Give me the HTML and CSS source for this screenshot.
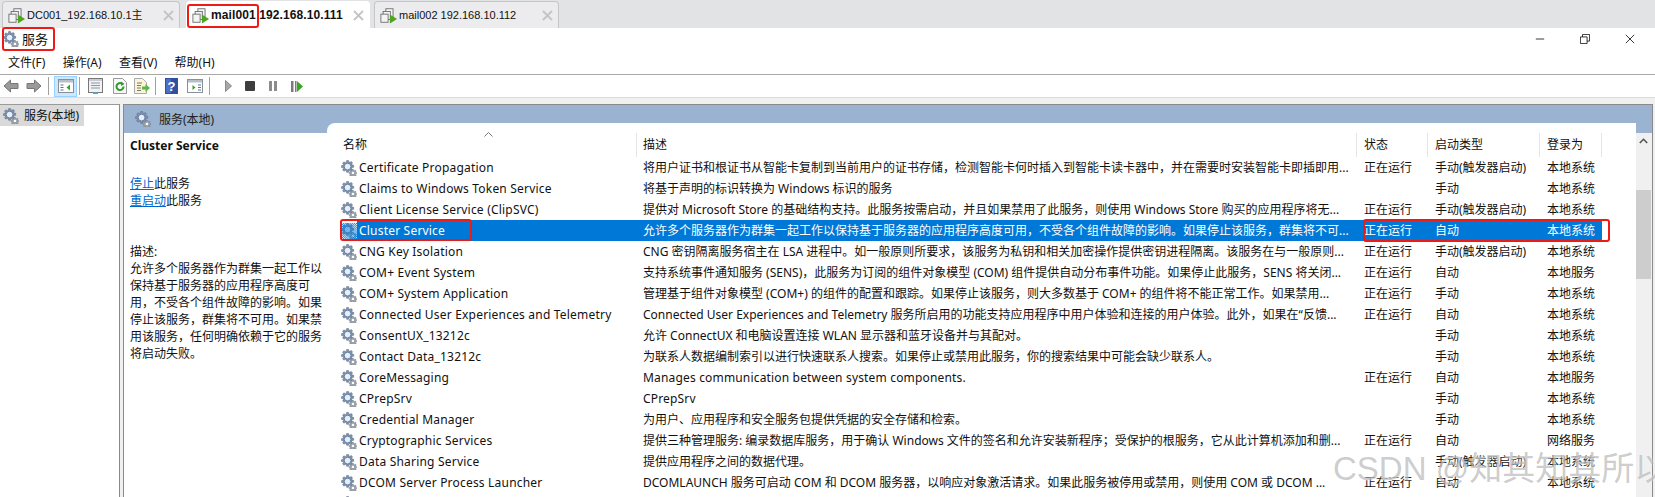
FILE: index.html
```html
<!DOCTYPE html>
<html lang="zh-CN">
<head>
<meta charset="utf-8">
<title>服务</title>
<link rel="stylesheet" href="styles.css">
</head>
<body>
<svg class="defs" width="0" height="0" aria-hidden="true">
  <defs>
    <pattern id="dither" width="2" height="2" patternUnits="userSpaceOnUse">
      <rect width="1" height="1" fill="#0078d7"/>
      <rect x="1" y="1" width="1" height="1" fill="#0078d7"/>
    </pattern>
  </defs>
  <symbol id="gear" viewBox="0 0 17 17">
    <path d="M6 .5h2l.3 1.500 1.200.5L10.800 1.600l1.500 1.400-.9 1.300.5 1.100 1.600.3v2l-1.600.3-.5 1.200.9 1.300-1.500 1.400-1.300-.9-1.200.5-.3 1.600H6l-.3-1.600-1.200-.5-1.300.9-1.500-1.400.9-1.300-.5-1.200L.5 8V6l1.600-.3.5-1.100-.9-1.300 1.500-1.400 1.300.9 1.200-.5z" fill="#7f93ad" stroke="#55627a" stroke-width=".5"/>
    <circle cx="7" cy="7" r="3.600" fill="#e6eef7" stroke="#5f7ba3" stroke-width="1"/>
    <path d="M12 10h1.400l.2 1 .8.3.8-.6 1 1-.6.8.3.8.6.1v1.400l-.6.2-.3.8.6.8-1 .6-.8-.5-.8.3-.2.6H12l-.2-.6-.8-.3-.8.5-1-.6.6-.8-.3-.8-.8-.2v-1.400l.8-.1.3-.8-.6-.8 1-1 .8.6.8-.3z" fill="#9aa3ad" stroke="#646d78" stroke-width=".4"/>
    <circle cx="12.700" cy="13.700" r="1.300" fill="#fff"/>
  </symbol>
  <symbol id="gear-selected" viewBox="0 0 17 17">
    <use href="#gear" width="17" height="17"/>
    <rect width="17" height="17" fill="url(#dither)"/>
  </symbol>
  <symbol id="vm" viewBox="0 0 20 18">
    <rect x="6.500" y="1.500" width="8" height="9" fill="#f4f4f4" stroke="#6d6d6d"/>
    <rect x="3.500" y="4.500" width="8" height="9" fill="#f4f4f4" stroke="#6d6d6d"/>
    <rect x="1" y="7.500" width="8" height="9" fill="#f4f4f4" stroke="#6d6d6d"/>
    <path d="M11 8l8 5-8 5z" fill="#4ea520"/>
  </symbol>
  <symbol id="close" viewBox="0 0 11 11">
    <path d="M1 1l9 9M10 1l-9 9" fill="none" stroke="#c4c4c4" stroke-width="1.800"/>
  </symbol>
</svg>

<header class="tabstrip">
  <div class="tab tab-first">
    <svg class="tab-icon"><use href="#vm"/></svg>
    <span class="tab-label">DC001_192.168.10.1主</span>
    <svg class="tab-close"><use href="#close"/></svg>
  </div>
  <div class="tab tab-active">
    <svg class="tab-icon"><use href="#vm"/></svg>
    <span class="tab-label">mail001 192.168.10.111</span>
    <svg class="tab-close"><use href="#close"/></svg>
  </div>
  <div class="tab tab-last">
    <svg class="tab-icon"><use href="#vm"/></svg>
    <span class="tab-label">mail002 192.168.10.112</span>
    <svg class="tab-close"><use href="#close"/></svg>
  </div>
</header>

<div class="titlebar">
  <svg class="gear"><use href="#gear"/></svg>
  <span class="title-text">服务</span>
  <div class="winbtns">
    <svg class="winbtn" viewBox="0 0 12 12"><path d="M1 6h10" stroke="#111" fill="none"/></svg>
    <svg class="winbtn" viewBox="0 0 12 12"><path d="M.5 3.500h8v8h-8zM3 3.500V.5h8.500v8H8.500" stroke="#111" fill="none"/></svg>
    <svg class="winbtn" viewBox="0 0 12 12"><path d="M1 1l10 10M11 1L1 11" stroke="#111" fill="none"/></svg>
  </div>
</div>

<nav class="menubar">
  <span>文件(F)</span><span>操作(A)</span><span>查看(V)</span><span>帮助(H)</span>
</nav>

<div class="toolbar">
  <svg class="tb tb-back" viewBox="0 0 16 14"><path d="M7.500 1L1 7l6.500 6V9.500H15v-5H7.500z" fill="#9a9a9a" stroke="#777"/></svg>
  <svg class="tb tb-fwd" viewBox="0 0 16 14"><path d="M8.500 1L15 7l-6.500 6V9.500H1v-5h7.500z" fill="#9a9a9a" stroke="#777"/></svg>
  <i class="tb-sep sep-a"></i>
  <span class="tb-sel"><svg viewBox="0 0 16 14" width="16" height="14"><rect x=".5" y=".5" width="15" height="13" fill="#fff" stroke="#8a8f96"/><path d="M1 1h14v2.500H1z" fill="#b8bec6"/><path d="M2.500 5.500h3v1h-3zM2.500 8h3v1h-3zM2.500 10.500h3v1h-3z" fill="#4c74a8"/><path d="M12 5.500v6L8.500 8.500z" fill="#3aa02c"/></svg></span>
  <i class="tb-sep sep-b"></i>
  <svg class="tb tb-props" viewBox="0 0 15 16"><rect x=".5" y=".5" width="14" height="14" fill="#f2f2f2" stroke="#777"/><path d="M1 1h13v2H1z" fill="#c8ccd2"/><path d="M3 5h9M3 7.500h9M3 10h9" stroke="#8b98a8"/><path d="M5 14h5v2H5z" fill="#49a6c9"/></svg>
  <svg class="tb tb-refresh" viewBox="0 0 14 16"><path d="M.5.5h9l4 4v11H.5z" fill="#f7f7f7" stroke="#999"/><path d="M10.500 8.500a3.500 3.500 0 1 1-1.500-2.800" fill="none" stroke="#2f9b2f" stroke-width="2"/><path d="M8 3.500l3.500 2.500L8 8z" fill="#2f9b2f"/></svg>
  <svg class="tb tb-export" viewBox="0 0 16 16"><path d="M.5.5h8l4 4v11H.5z" fill="#fbf5d6" stroke="#aaa"/><path d="M3 5h5M3 7.500h4M3 10h4M3 12.500h4" stroke="#777"/><path d="M8 8.500h3.500V6l4.500 4-4.500 4v-2.500H8z" fill="#5eb646"/></svg>
  <i class="tb-sep sep-c"></i>
  <svg class="tb tb-help" viewBox="0 0 13 16"><rect width="13" height="16" fill="#2f4f9f"/><rect x="1" y="1" width="5" height="14" fill="#4a6fc4"/><text x="6.500" y="13" text-anchor="middle" class="help-q">?</text></svg>
  <svg class="tb tb-view" viewBox="0 0 16 14"><rect x=".5" y=".5" width="15" height="13" fill="#fff" stroke="#8a8f96"/><path d="M1 1h14v2.500H1z" fill="#b8bec6"/><path d="M5.500 6v5l3-2.500z" fill="#3aa02c"/><path d="M11 5.500h3v1h-3zM11 8h3v1h-3zM11 10.500h3v1h-3z" fill="#4c74a8"/></svg>
  <i class="tb-sep sep-d"></i>
  <svg class="tb tb-play" viewBox="0 0 7 12"><path d="M.5.5l6 5.500-6 5.500z" fill="#a8a8a8" stroke="#8a8a8a"/></svg>
  <svg class="tb tb-stop" viewBox="0 0 10 10"><rect width="10" height="10" rx="1" fill="#3e3e3e"/></svg>
  <svg class="tb tb-pause" viewBox="0 0 8 10"><path d="M0 0h3v10H0zM5 0h3v10H5z" fill="#8b8b8b"/></svg>
  <svg class="tb tb-resume" viewBox="0 0 12 11"><path d="M0 0h2.500v11H0z" fill="#7b7b7b"/><path d="M4 0h1.500v11H4z" fill="#7b7b7b"/><path d="M6 0l6 5.500L6 11z" fill="#3aa81f"/></svg>
</div>

<main class="workspace">
  <aside class="tree">
    <div class="tree-item">
      <svg class="gear"><use href="#gear"/></svg>
      <span>服务(本地)</span>
    </div>
  </aside>

  <section class="pane">
    <div class="pane-head">
      <svg class="gear"><use href="#gear"/></svg>
      <span>服务(本地)</span>
    </div>
    <div class="pane-body">
      <div class="detail">
        <h1 class="detail-title">Cluster Service</h1>
        <p class="detail-links"><a>停止</a>此服务<br><a>重启动</a>此服务</p>
        <p class="detail-desc">描述:<br>允许多个服务器作为群集一起工作以保持基于服务器的应用程序高度可用，不受各个组件故障的影响。如果停止该服务，群集将不可用。如果禁用该服务，任何明确依赖于它的服务将启动失败。</p>
      </div>

      <div class="list">
        <div class="list-head">
          <span class="cell c-name">名称<svg class="sort" viewBox="0 0 9 5"><path d="M.5 4.500l4-4 4 4" fill="none" stroke="#777"/></svg></span>
          <span class="cell c-desc">描述</span>
          <span class="cell c-state">状态</span>
          <span class="cell c-start">启动类型</span>
          <span class="cell c-logon">登录为</span>
        </div>

        <div class="row"><svg class="gear"><use href="#gear"/></svg><span class="cell c-name">Certificate Propagation</span><span class="cell c-desc">将用户证书和根证书从智能卡复制到当前用户的证书存储，检测智能卡何时插入到智能卡读卡器中，并在需要时安装智能卡即插即用...</span><span class="cell c-state">正在运行</span><span class="cell c-start">手动(触发器启动)</span><span class="cell c-logon">本地系统</span></div>
        <div class="row"><svg class="gear"><use href="#gear"/></svg><span class="cell c-name">Claims to Windows Token Service</span><span class="cell c-desc">将基于声明的标识转换为 Windows 标识的服务</span><span class="cell c-state"></span><span class="cell c-start">手动</span><span class="cell c-logon">本地系统</span></div>
        <div class="row"><svg class="gear"><use href="#gear"/></svg><span class="cell c-name">Client License Service (ClipSVC)</span><span class="cell c-desc">提供对 Microsoft Store 的基础结构支持。此服务按需启动，并且如果禁用了此服务，则使用 Windows Store 购买的应用程序将无...</span><span class="cell c-state">正在运行</span><span class="cell c-start">手动(触发器启动)</span><span class="cell c-logon">本地系统</span></div>
        <div class="row row-selected"><svg class="gear"><use href="#gear-selected"/></svg><span class="cell c-name">Cluster Service</span><span class="cell c-desc">允许多个服务器作为群集一起工作以保持基于服务器的应用程序高度可用，不受各个组件故障的影响。如果停止该服务，群集将不可...</span><span class="cell c-state">正在运行</span><span class="cell c-start">自动</span><span class="cell c-logon">本地系统</span></div>
        <div class="row"><svg class="gear"><use href="#gear"/></svg><span class="cell c-name">CNG Key Isolation</span><span class="cell c-desc">CNG 密钥隔离服务宿主在 LSA 进程中。如一般原则所要求，该服务为私钥和相关加密操作提供密钥进程隔离。该服务在与一般原则...</span><span class="cell c-state">正在运行</span><span class="cell c-start">手动(触发器启动)</span><span class="cell c-logon">本地系统</span></div>
        <div class="row"><svg class="gear"><use href="#gear"/></svg><span class="cell c-name">COM+ Event System</span><span class="cell c-desc">支持系统事件通知服务 (SENS)，此服务为订阅的组件对象模型 (COM) 组件提供自动分布事件功能。如果停止此服务，SENS 将关闭...</span><span class="cell c-state">正在运行</span><span class="cell c-start">自动</span><span class="cell c-logon">本地服务</span></div>
        <div class="row"><svg class="gear"><use href="#gear"/></svg><span class="cell c-name">COM+ System Application</span><span class="cell c-desc">管理基于组件对象模型 (COM+) 的组件的配置和跟踪。如果停止该服务，则大多数基于 COM+ 的组件将不能正常工作。如果禁用...</span><span class="cell c-state">正在运行</span><span class="cell c-start">手动</span><span class="cell c-logon">本地系统</span></div>
        <div class="row"><svg class="gear"><use href="#gear"/></svg><span class="cell c-name">Connected User Experiences and Telemetry</span><span class="cell c-desc">Connected User Experiences and Telemetry 服务所启用的功能支持应用程序中用户体验和连接的用户体验。此外，如果在“反馈...</span><span class="cell c-state">正在运行</span><span class="cell c-start">自动</span><span class="cell c-logon">本地系统</span></div>
        <div class="row"><svg class="gear"><use href="#gear"/></svg><span class="cell c-name">ConsentUX_13212c</span><span class="cell c-desc">允许 ConnectUX 和电脑设置连接 WLAN 显示器和蓝牙设备并与其配对。</span><span class="cell c-state"></span><span class="cell c-start">手动</span><span class="cell c-logon">本地系统</span></div>
        <div class="row"><svg class="gear"><use href="#gear"/></svg><span class="cell c-name">Contact Data_13212c</span><span class="cell c-desc">为联系人数据编制索引以进行快速联系人搜索。如果停止或禁用此服务，你的搜索结果中可能会缺少联系人。</span><span class="cell c-state"></span><span class="cell c-start">手动</span><span class="cell c-logon">本地系统</span></div>
        <div class="row"><svg class="gear"><use href="#gear"/></svg><span class="cell c-name">CoreMessaging</span><span class="cell c-desc latin">Manages communication between system components.</span><span class="cell c-state">正在运行</span><span class="cell c-start">自动</span><span class="cell c-logon">本地服务</span></div>
        <div class="row"><svg class="gear"><use href="#gear"/></svg><span class="cell c-name">CPrepSrv</span><span class="cell c-desc latin">CPrepSrv</span><span class="cell c-state"></span><span class="cell c-start">手动</span><span class="cell c-logon">本地系统</span></div>
        <div class="row"><svg class="gear"><use href="#gear"/></svg><span class="cell c-name">Credential Manager</span><span class="cell c-desc">为用户、应用程序和安全服务包提供凭据的安全存储和检索。</span><span class="cell c-state"></span><span class="cell c-start">手动</span><span class="cell c-logon">本地系统</span></div>
        <div class="row"><svg class="gear"><use href="#gear"/></svg><span class="cell c-name">Cryptographic Services</span><span class="cell c-desc">提供三种管理服务: 编录数据库服务，用于确认 Windows 文件的签名和允许安装新程序；受保护的根服务，它从此计算机添加和删...</span><span class="cell c-state">正在运行</span><span class="cell c-start">自动</span><span class="cell c-logon">网络服务</span></div>
        <div class="row"><svg class="gear"><use href="#gear"/></svg><span class="cell c-name">Data Sharing Service</span><span class="cell c-desc">提供应用程序之间的数据代理。</span><span class="cell c-state"></span><span class="cell c-start">手动(触发器启动)</span><span class="cell c-logon">本地系统</span></div>
        <div class="row"><svg class="gear"><use href="#gear"/></svg><span class="cell c-name">DCOM Server Process Launcher</span><span class="cell c-desc">DCOMLAUNCH 服务可启动 COM 和 DCOM 服务器，以响应对象激活请求。如果此服务被停用或禁用，则使用 COM 或 DCOM ...</span><span class="cell c-state">正在运行</span><span class="cell c-start">自动</span><span class="cell c-logon">本地系统</span></div>
        <div class="row"><svg class="gear"><use href="#gear"/></svg></div>
      </div>

      <div class="scrollbar">
        <svg class="scroll-up" viewBox="0 0 9 6"><path d="M.8 5L4.500 1.300 8.200 5" fill="none" stroke="#555" stroke-width="1.600"/></svg>
        <div class="scroll-thumb"></div>
      </div>
    </div>
  </section>
</main>

<div class="mark mark-tab"></div>
<div class="mark mark-title"></div>
<div class="mark mark-name"></div>
<div class="mark mark-state"></div>
<div class="watermark">CSDN @知其知其所以</div>
</body>
</html>
```
FILE: styles.css
```css
* { box-sizing: border-box; }
html, body { margin: 0; padding: 0; }
body {
  position: relative;
  width: 1655px;
  height: 497px;
  overflow: hidden;
  background: #fff;
  color: #111;
  font: 12px/17px "Noto Sans", "Noto Sans CJK SC", sans-serif;
}
.defs { position: absolute; }

/* tab strip */
.tabstrip {
  display: flex;
  height: 28px;
  padding: 1px 0 0 2px;
  gap: 5px;
  background: #e2e3e5;
}
.tab {
  display: flex;
  align-items: center;
  flex: none;
  height: 27px;
  padding: 0 5px;
  background: #ececee;
  border: 1px solid #c6c6c8;
  border-bottom: 0;
  border-radius: 4px 4px 0 0;
}
.tab-first { width: 178px; }
.tab-active { width: 184px; margin-left: 1px; background: #fff; border-color: #fff; }
.tab-last { width: 185px; margin-left: -1px; }
.tab-icon { width: 18px; height: 17px; flex: none; }
.tab-label {
  flex: 1;
  margin-left: 1px;
  white-space: nowrap;
  font: 11px/17px "Liberation Sans", "Noto Sans CJK SC", sans-serif;
}
.tab-active .tab-label { font-size: 12px; font-weight: 700; letter-spacing: .1px; }
.tab-close { width: 11px; height: 11px; flex: none; }

/* title + menu */
.titlebar {
  display: flex;
  align-items: center;
  height: 22px;
  padding-left: 3px;
}
.title-text { margin-left: 3px; font-size: 13px; }
.winbtns { display: flex; margin-left: auto; margin-right: 20px; gap: 35px; }
.winbtn { width: 10px; height: 10px; }
.gear { width: 16px; height: 16px; flex: none; }
.menubar {
  display: flex;
  align-items: center;
  gap: 17.300px;
  height: 25px;
  padding-left: 8px;
  border-bottom: 1px solid #a8a8a8;
}

/* toolbar */
.toolbar {
  display: flex;
  align-items: center;
  height: 23px;
  padding-left: 3px;
  border-bottom: 1px solid #dcdcdc;
}
.tb { flex: none; }
.tb-back, .tb-fwd { width: 16px; height: 14px; }
.tb-fwd { margin-left: 7px; }
.tb-sep { flex: none; width: 1px; height: 18px; background: #a0a0a0; }
.sep-a { margin: 0 5px 0 6px; }
.tb-sel {
  display: flex;
  align-items: center;
  justify-content: center;
  flex: none;
  width: 23px;
  height: 21px;
  background: #cce8ff;
  border: 1px solid #99d1ff;
}
.sep-b { margin: 0 8px 0 2px; }
.tb-props { width: 15px; height: 16px; }
.tb-refresh { width: 14px; height: 16px; margin-left: 10px; }
.tb-export { width: 16px; height: 16px; margin-left: 7px; }
.sep-c { margin: 0 9px 0 5px; }
.tb-help { width: 13px; height: 16px; }
.help-q { fill: #fff; font: 700 13px "Liberation Sans", sans-serif; }
.tb-view { width: 16px; height: 14px; margin-left: 9px; }
.sep-d { margin: 0 15px 0 6px; }
.tb-play { width: 7px; height: 12px; }
.tb-stop { width: 10px; height: 10px; margin-left: 13px; }
.tb-pause { width: 8px; height: 10px; margin-left: 14px; }
.tb-resume { width: 12px; height: 11px; margin-left: 14px; }

/* workspace */
.workspace {
  display: flex;
  height: 399px;
  padding-top: 6px;
  background: #f0f0f0;
}
.tree {
  flex: none;
  width: 120px;
  height: 393px;
  background: #fff;
  border-top: 1px solid #9a9a9a;
  border-right: 1px solid #8a8a8a;
}
.tree-item {
  display: flex;
  align-items: center;
  gap: 5px;
  width: 84px;
  height: 21px;
  padding-left: 3px;
  background: #d9d9d9;
}
.pane {
  flex: none;
  display: flex;
  flex-direction: column;
  width: 1530px;
  height: 393px;
  margin-left: 3px;
  overflow: hidden;
  background: #fff;
  border-top: 1px solid #8a8a8a;
  border-left: 1px solid #8a8a8a;
  border-right: 1px solid #8a8a8a;
}
.pane-head {
  display: flex;
  flex: none;
  align-items: flex-start;
  gap: 8px;
  height: 28px;
  padding: 6px 0 0 11px;
  background: #9ab3d0;
  color: #222;
}
.pane-body {
  position: relative;
  display: flex;
  flex: 1;
  min-height: 0;
}

/* detail column */
.detail {
  flex: none;
  width: 203px;
  padding: 4px 5px 0 6px;
}
.detail-title {
  margin: 0;
  font: 700 12px/17px "Noto Sans", sans-serif;
}
.detail-links { margin: 21px 0 0; }
.detail-links a { color: #0066cc; text-decoration: underline; }
.detail-desc { margin: 34px 0 0; }

/* service list */
.list {
  flex: none;
  width: 1309px;
  margin-top: -10px;
  background: #fff;
  border-radius: 8px 0 0 0;
}
.list-head {
  display: grid;
  grid-template-columns: 296px 720px 71px 112px 62px;
  height: 34px;
  padding: 10px 0 0 14px;
}
.list-head .cell {
  position: relative;
  display: block;
  padding-left: 7px;
  line-height: 24px;
  height: 24px;
  border-right: 1px solid #e4e4e4;
}
.list-head .c-name { padding-left: 2px; }
.list-head .c-desc { padding-left: 6px; }
.sort {
  position: absolute;
  top: -1px;
  left: 143px;
  width: 9px;
  height: 5px;
}
.row {
  display: grid;
  grid-template-columns: 16px 279px 721px 71px 112px 62px;
  align-items: center;
  height: 21px;
  padding-left: 14px;
  white-space: nowrap;
}
.row .cell { padding-left: 7px; }
.row .c-name { padding-left: 2px; letter-spacing: .2px; }
.row .latin { letter-spacing: .17px; }
.row-selected { color: #fff; }
.row-selected .cell { background: #0078d7; height: 21px; line-height: 21px; }

/* scrollbar */
.scrollbar {
  position: relative;
  flex: none;
  width: 16px;
  background: #f0f0f0;
}
.scroll-up {
  position: absolute;
  top: 5px;
  left: 3px;
  width: 9px;
  height: 6px;
}
.scroll-thumb {
  position: absolute;
  top: 57px;
  left: 0;
  width: 15px;
  height: 89px;
  background: #cdcdcd;
}

/* annotation overlays */
.mark {
  position: absolute;
  border: 2px solid #f01a14;
  border-radius: 3px;
}
.mark-tab { left: 187px; top: 4px; width: 72px; height: 24px; }
.mark-title { left: 2px; top: 27px; width: 53px; height: 24px; }
.mark-name { left: 340px; top: 219px; width: 132px; height: 22px; }
.mark-state { left: 1363px; top: 219px; width: 247px; height: 23px; }
.watermark {
  position: absolute;
  left: 1333px;
  top: 447px;
  color: rgba(125, 125, 125, .4);
  font: 33px/44px "Liberation Sans", "Noto Sans CJK SC", sans-serif;
  text-shadow: 0 0 2px rgba(255, 255, 255, .85);
  white-space: nowrap;
}
```
